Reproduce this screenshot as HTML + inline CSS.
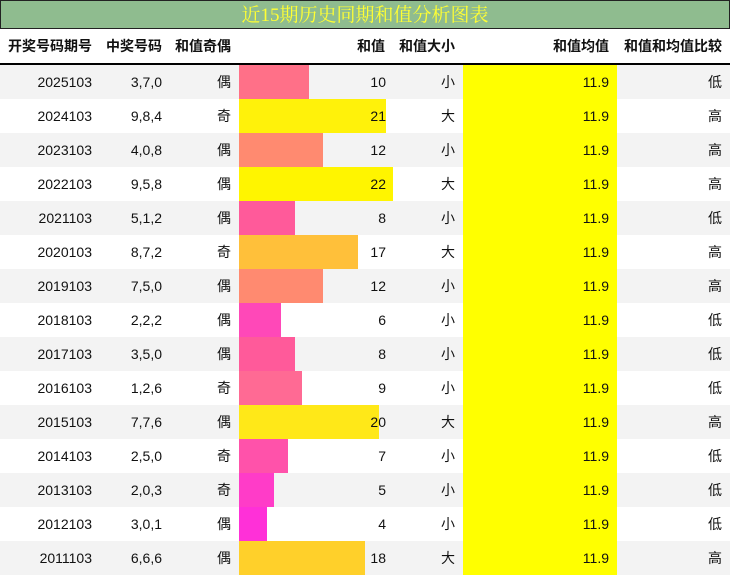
<!DOCTYPE html><html><head><meta charset="utf-8"><style>
body{margin:0;width:730px;height:576px;overflow:hidden;background:#fff;font-family:"Liberation Sans","Noto Sans CJK SC",sans-serif;font-size:14px;color:#111}
.t{position:absolute;left:0;top:0;width:728px;height:27px;background:#8fbc8f;border:1px solid #222;color:#ffff33;font-family:"Liberation Serif","Noto Serif CJK SC",serif;font-size:19px;text-align:center;line-height:29px}
table{position:absolute;left:0;top:29px;border-collapse:collapse;table-layout:fixed}
td,th{padding:0 8px 0 0;text-align:right;height:34px;white-space:nowrap}
th{font-weight:bold;height:34px;border-bottom:2px solid #000}
tr:nth-child(even) td{background:#f3f3f3}
td.b{position:relative;padding:0 7px 0 0}
td.b i{position:absolute;left:0;top:0;height:34px}
td.b span{position:relative}
td.y{background:#ffff00!important}
</style></head><body>
<div class="t">近15期历史同期和值分析图表</div>
<table>
<colgroup><col style="width:100px"><col style="width:70px"><col style="width:69px"><col style="width:154px"><col style="width:70px"><col style="width:154px"><col style="width:113px"></colgroup>
<tr><th>开奖号码期号</th><th>中奖号码</th><th>和值奇偶</th><th>和值</th><th>和值大小</th><th>和值均值</th><th>和值和均值比较</th></tr>
<tr><td>2025103</td><td>3,7,0</td><td>偶</td><td class="b"><i style="width:70px;background:#ff7088"></i><span>10</span></td><td>小</td><td class="y">11.9</td><td>低</td></tr>
<tr><td>2024103</td><td>9,8,4</td><td>奇</td><td class="b"><i style="width:147px;background:#fff20a"></i><span>21</span></td><td>大</td><td class="y">11.9</td><td>高</td></tr>
<tr><td>2023103</td><td>4,0,8</td><td>偶</td><td class="b"><i style="width:84px;background:#ff8a70"></i><span>12</span></td><td>小</td><td class="y">11.9</td><td>高</td></tr>
<tr><td>2022103</td><td>9,5,8</td><td>偶</td><td class="b"><i style="width:154px;background:#fff500"></i><span>22</span></td><td>大</td><td class="y">11.9</td><td>高</td></tr>
<tr><td>2021103</td><td>5,1,2</td><td>偶</td><td class="b"><i style="width:56px;background:#ff5a9a"></i><span>8</span></td><td>小</td><td class="y">11.9</td><td>低</td></tr>
<tr><td>2020103</td><td>8,7,2</td><td>奇</td><td class="b"><i style="width:119px;background:#ffc03a"></i><span>17</span></td><td>大</td><td class="y">11.9</td><td>高</td></tr>
<tr><td>2019103</td><td>7,5,0</td><td>偶</td><td class="b"><i style="width:84px;background:#ff8a70"></i><span>12</span></td><td>小</td><td class="y">11.9</td><td>高</td></tr>
<tr><td>2018103</td><td>2,2,2</td><td>偶</td><td class="b"><i style="width:42px;background:#ff48b8"></i><span>6</span></td><td>小</td><td class="y">11.9</td><td>低</td></tr>
<tr><td>2017103</td><td>3,5,0</td><td>偶</td><td class="b"><i style="width:56px;background:#ff5a9a"></i><span>8</span></td><td>小</td><td class="y">11.9</td><td>低</td></tr>
<tr><td>2016103</td><td>1,2,6</td><td>奇</td><td class="b"><i style="width:63px;background:#ff6a94"></i><span>9</span></td><td>小</td><td class="y">11.9</td><td>低</td></tr>
<tr><td>2015103</td><td>7,7,6</td><td>偶</td><td class="b"><i style="width:140px;background:#ffe818"></i><span>20</span></td><td>大</td><td class="y">11.9</td><td>高</td></tr>
<tr><td>2014103</td><td>2,5,0</td><td>奇</td><td class="b"><i style="width:49px;background:#ff52aa"></i><span>7</span></td><td>小</td><td class="y">11.9</td><td>低</td></tr>
<tr><td>2013103</td><td>2,0,3</td><td>奇</td><td class="b"><i style="width:35px;background:#ff3cc8"></i><span>5</span></td><td>小</td><td class="y">11.9</td><td>低</td></tr>
<tr><td>2012103</td><td>3,0,1</td><td>偶</td><td class="b"><i style="width:28px;background:#ff30d8"></i><span>4</span></td><td>小</td><td class="y">11.9</td><td>低</td></tr>
<tr><td>2011103</td><td>6,6,6</td><td>偶</td><td class="b"><i style="width:126px;background:#ffd02a"></i><span>18</span></td><td>大</td><td class="y">11.9</td><td>高</td></tr>
</table>
</body></html>
